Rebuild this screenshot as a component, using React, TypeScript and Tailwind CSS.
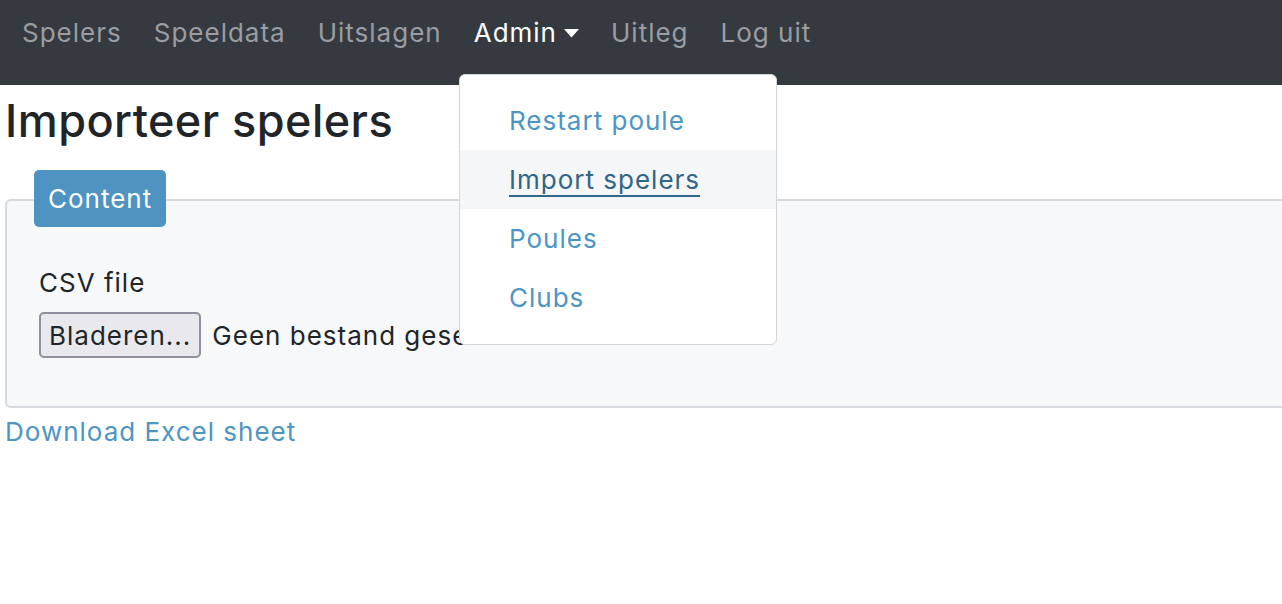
import React from "react";

const navItems = ["Spelers", "Speeldata", "Uitslagen"];
const navItemsRight = ["Uitleg", "Log uit"];

function Caret() {
  return (
    <svg width="15" height="9" viewBox="0 0 15 9" className="ml-[7px] mt-[2px]">
      <path d="M0 0 L15 0 L7.5 8.5 Z" fill="#ffffff" />
    </svg>
  );
}

function AdminMenu() {
  const items = ["Restart poule", "Import spelers", "Poules", "Clubs"];
  return (
    <div className="absolute left-[459px] top-[74px] w-[318px] h-[271px] bg-white border border-[#d3d5d8] rounded-[6px] py-[16px] z-10">
      {items.map((label) => {
        const active = label === "Import spelers";
        return (
          <div
            key={label}
            className={`h-[59px] flex items-center pl-[49px] text-[26px] ${
              active ? "bg-[#f5f6f8] text-[#2f6689] underline underline-offset-[6px] decoration-2" : "text-[#4c95c4]"
            }`}
          >
            {label}
          </div>
        );
      })}
    </div>
  );
}

export default function App() {
  return (
    <div className="relative min-h-[604px] bg-white overflow-hidden font-['Inter',sans-serif] text-[#212529] tracking-[1px]">
      <nav className="h-[85px] bg-[#343a40] flex items-start pl-[22px] pt-[13px] gap-[32px] text-[26px] text-[#9a9da1]">
        {navItems.map((n) => (
          <span key={n}>{n}</span>
        ))}
        <span className="text-white flex items-center">
          Admin
          <Caret />
        </span>
        {navItemsRight.map((n) => (
          <span key={n}>{n}</span>
        ))}
      </nav>

      <AdminMenu />

      <h1 className="text-[45px] font-medium leading-none pl-[5px] pt-[13px] tracking-[0.45px]">Importeer spelers</h1>

      <div className="relative mt-[56px] ml-[5px]">
        <div className="absolute left-[29px] -top-[29px] h-[57px] px-[14px] flex items-center bg-[#4e93c2] text-white text-[26px] rounded-[5px]">
          Content
        </div>
        <div className="bg-[#f7f8fa] border-y-2 border-l-2 border-[#d6d9de] rounded-l-[6px] h-[209px] pl-[32px] pt-[66px]">
          <div className="text-[26px] leading-[32px]">CSV file</div>
          <div className="flex items-center mt-[13px]">
            <div className="h-[46px] px-[8px] flex items-center bg-[#e9e9ed] border-2 border-[#8f8f9d] rounded-[5px] text-[26px]">
              Bladeren...
            </div>
            <span className="ml-[11px] text-[26px]">Geen bestand geselecteerd.</span>
          </div>
        </div>
      </div>

      <div className="pl-[5px] pt-[4px] text-[26px] text-[#4c95c4]">Download Excel sheet</div>
    </div>
  );
}
